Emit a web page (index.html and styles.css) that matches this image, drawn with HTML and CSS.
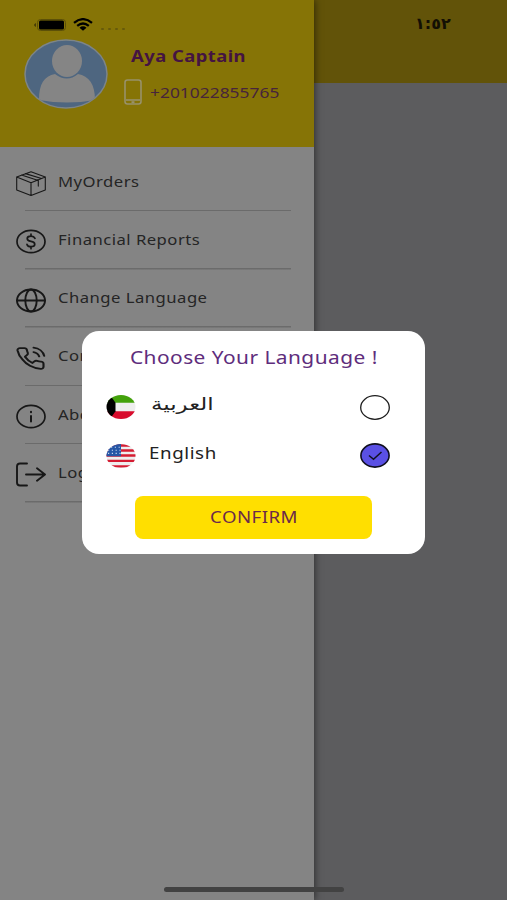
FILE: index.html
```html
<!DOCTYPE html>
<html lang="en">
<head>
  <meta charset="UTF-8" />
  <meta name="viewport" content="width=device-width, initial-scale=1.0" />
  <title>Choose Your Language</title>
  <link rel="stylesheet" href="styles.css">
</head>
<body>
  <div class="screen">
    <aside class="drawer">
      <header class="profile">
        <div class="status">
          <svg class="battery" viewBox="0 0 32 12"><path d="M2 4v4Q0 7 0 6t2-2z" fill="#463d08"/><rect x="3.5" y=".5" width="28" height="11" rx="3" fill="none" stroke="#5c5008"/><rect x="5" y="1.500" width="25" height="9" rx="1.500"/></svg>
          <svg class="wifi" viewBox="0 0 20 13" fill="none" stroke="#000" stroke-width="2.300"><path d="M1 4.800Q10-2.500 19 4.800M4.200 7.800Q10 3.200 15.800 7.800"/><path d="M6.500 9.700Q10 7 13.500 9.700L10 12.800z" fill="#000" stroke="none"/></svg>
          <span class="dots"><i></i><i></i><i></i><i></i></span>
        </div>
        <div class="user">
          <svg class="avatar" viewBox="0 0 84 70"><defs><clipPath id="face"><ellipse cx="42" cy="35" rx="40.500" ry="33.500"/></clipPath></defs><ellipse cx="42" cy="35" rx="41" ry="34" fill="#4e6680" stroke="#7d8589" stroke-width="1.500"/><g clip-path="url(#face)"><path d="M15 61C15 45 20 37 31 35q12 9 23 0c11 2 17 10 17 26q-28 5-56 0z" fill="#858585"/><ellipse cx="43" cy="22" rx="15" ry="16" fill="#858585"/></g></svg>
          <div class="contact">
            <div class="name"><span>Aya Captain</span></div>
            <div class="phone">
              <svg viewBox="0 0 18 26" fill="none" stroke="#98916a" stroke-width="1.600"><rect x="1" y="1" width="16" height="24" rx="2.500"/><path d="M2 21h14"/><path d="M7.500 23.200h3" stroke-width="2"/></svg>
              <span>+201022855765</span>
            </div>
          </div>
        </div>
      </header>
      <nav class="menu">
        <a class="item">
          <svg viewBox="0 0 30 24" preserveAspectRatio="none" stroke-width="1.100"><path d="M15 .7L29.300 5.700v12.500L15 23.500.7 18.200V5.700zM.7 5.700L15 11.200l14.300-5.500M15 11.200v12.300M5.500 3.900l16.800 5.200v5.400M9.500 2.500l16 4.700"/></svg>
          <span>MyOrders</span>
        </a>
        <a class="item">
          <svg viewBox="0 0 30 24" stroke-width="1.700"><ellipse cx="15" cy="12" rx="14" ry="11.200"/><path d="M19 8.800Q18 6.700 15 6.700c-5 0-5 4.700 0 5.200s5 5.300 0 5.300q-3.300 0-4-2.300M15 4.700v2M15 17.200v2"/></svg>
          <span>Financial Reports</span>
        </a>
        <a class="item">
          <svg viewBox="0 0 30 24" stroke-width="1.900"><ellipse cx="15" cy="12" rx="14" ry="11"/><ellipse cx="15" cy="12" rx="5.700" ry="11"/><path d="M1 12h28"/></svg>
          <span>Change Language</span>
        </a>
        <a class="item">
          <svg viewBox="0 0 24 24" preserveAspectRatio="none" stroke-width="1.700"><path d="M14.050 1.500a10 10 0 0 1 8.500 8M14.050 5.800a6 6 0 0 1 4.500 4.200M22 17v3a2 2 0 0 1-2.200 2A19.800 19.800 0 0 1 11.200 19a19.500 19.500 0 0 1-6-6A19.800 19.800 0 0 1 1.200 4.200 2 2 0 0 1 3.200 2h3.500a2 2 0 0 1 2 1.700c.1 1 .4 1.900.7 2.800a2 2 0 0 1-.5 2.100L7.200 10.300a16 16 0 0 0 6 6l1.500-1.500a2 2 0 0 1 2.100-.5c.9.300 1.900.6 2.900.7A2 2 0 0 1 22 17z"/></svg>
          <span>Contact</span>
        </a>
        <a class="item">
          <svg viewBox="0 0 30 24" stroke-width="1.700"><ellipse cx="15" cy="12" rx="14" ry="11.200"/><path d="M15 11.500v5.500M15 7.200v.6" stroke-width="2"/></svg>
          <span>About</span>
        </a>
        <a class="item">
          <svg viewBox="0 0 30 24" stroke-width="1.900"><path d="M11 1H4Q1 1 1 4v16q0 3 3 3h7M10 12h18.500M21 5.800l8 6.200-8 6.200"/></svg>
          <span>Logout</span>
        </a>
      </nav>
    </aside>
    <main class="page">
      <div class="topbar"><time lang="ar">١:٥٢</time></div>
    </main>

    <div class="modal">
      <h2><span>Choose Your Language !</span></h2>
      <div class="option">
        <svg class="flag" viewBox="0 0 30 24"><defs><clipPath id="oval"><ellipse cx="15" cy="12" rx="14.500" ry="12"/></clipPath></defs><g clip-path="url(#oval)"><path fill="#eee" d="M0 0h30v24H0z"/><path fill="#43a20b" d="M0 0h30v7.800H0z"/><path fill="#d80c2d" d="M0 16.200h30V24H0z"/><path d="M0 0h4l5.500 7.800v8.400L4 24H0z"/></g></svg>
        <span class="label arabic" lang="ar">العربية</span>
        <svg class="radio" viewBox="0 0 30 25"><ellipse cx="15" cy="12.500" rx="14.300" ry="11.800" fill="#fff" stroke="#1d1d1d" stroke-width="1.300"/></svg>
      </div>
      <div class="option">
        <svg class="flag" viewBox="0 0 30 24"><g clip-path="url(#oval)"><path fill="#eee" d="M0 0h30v24H0z"/><path stroke="#d51c32" stroke-width="2.300" d="M0 1.500h30M0 6.500h30M0 11.500h30M0 16.800h30M0 22.300h30"/><path fill="#2556a6" d="M0 0h15v12.200H0z"/><path stroke="#c8d8ef" stroke-width="1.100" stroke-dasharray="1.200 2.600" d="M5 3.200h10M2 6.300h13M2 9.400h13"/></g></svg>
        <span class="label">English</span>
        <svg class="radio" viewBox="0 0 30 25"><ellipse cx="15" cy="12.500" rx="14.100" ry="11.600" fill="#5a50e4" stroke="#10101f" stroke-width="1.600"/><path d="M9 12.500l4.500 3.800 8-7.300" fill="none" stroke="#10101f" stroke-width="1.500"/></svg>
      </div>
      <button type="button"><span>CONFIRM</span></button>
    </div>
    <div class="home-bar"></div>
  </div>
</body>
</html>
```
FILE: styles.css
```css
body {
  margin: 0;
  font-family: 'Noto Sans', 'DejaVu Sans', sans-serif;
}

svg {
  display: block;
  flex: none;
}

/* wide letterforms */
span,
time {
  display: inline-block;
  white-space: nowrap;
  transform: scaleX(1.2);
  transform-origin: left center;
}

.screen {
  position: relative;
  display: flex;
  width: 507px;
  height: 900px;
  overflow: hidden;
  background-color: #5c5c5e;
}

.drawer {
  z-index: 1;
  width: 314px;
  background-color: #848484;
  box-shadow: 1px 0 7px rgba(0, 0, 0, 0.5);
}

.profile {
  box-sizing: border-box;
  height: 147px;
  padding-top: 18px;
  background-color: #867406;
}

.status {
  display: flex;
  align-items: center;
  height: 13px;
  padding-left: 34px;
}

.battery {
  width: 32px;
  height: 12px;
}

.wifi {
  width: 20px;
  height: 13px;
  margin-left: 7px;
}

.dots {
  display: flex;
  gap: 4px;
  margin: 9px 0 0 8px;
  transform: none;
}

.dots i {
  width: 3px;
  height: 2px;
  border-radius: 1px;
  background-color: #665a0b;
}

.user {
  display: flex;
  padding: 8px 0 0 24px;
}

.avatar {
  width: 84px;
  height: 70px;
}

.contact {
  padding-left: 16px;
}

.name {
  height: 34px;
  padding-left: 7px;
  color: #441342;
  font-size: 16px;
  font-weight: 700;
  line-height: 35px;
  letter-spacing: 0.4px;
}

.name span {
  transform: scaleX(1.15);
}

.phone {
  display: flex;
  align-items: center;
  gap: 8px;
  height: 38px;
  color: #47243b;
  font-size: 15px;
}

.phone span {
  transform: scaleX(1.16);
}

.phone svg {
  width: 18px;
  height: 26px;
}

.menu {
  padding-top: 6px;
}

.item {
  display: flex;
  align-items: center;
  box-sizing: border-box;
  height: 58.25px;
  padding: 3px 0 0 16px;
  background: linear-gradient(#6b6b6b, #6b6b6b) 25px 100% / 266px 1.500px no-repeat;
  color: #252525;
  font-size: 14px;
  letter-spacing: 0.4px;
}

.item svg {
  width: 30px;
  height: 25px;
  margin-right: 12px;
  fill: none;
  stroke: #171717;
  stroke-linecap: round;
  stroke-linejoin: round;
}

.item span {
  margin-top: -5px;
  transform: scaleX(1.19);
}

.page {
  flex: 1;
}

.topbar {
  height: 83px;
  background-color: #625309;
}

.topbar time {
  margin: 14px 0 0 101px;
  color: #130f04;
  font-family: 'DejaVu Sans', sans-serif;
  font-size: 16px;
  font-weight: 700;
  line-height: 20px;
  transform: none;
}

.modal {
  position: absolute;
  z-index: 2;
  top: 331px;
  left: 82px;
  box-sizing: border-box;
  width: 343px;
  height: 223px;
  padding-top: 6px;
  border-radius: 17px;
  background-color: #fff;
}

.modal h2 {
  margin: 0;
  height: 46px;
  color: #5e2d7c;
  font-size: 18px;
  font-weight: 400;
  line-height: 40px;
  letter-spacing: 0.4px;
  text-align: center;
}

.modal h2 span {
  transform: scaleX(1.16);
  transform-origin: center;
}

.modal button span {
  transform: scaleX(1.1);
  transform-origin: center;
}

.option {
  display: flex;
  align-items: center;
  height: 48.500px;
  padding: 0 35px 0 24px;
}

.flag {
  width: 30px;
  height: 24px;
}

.label {
  margin: -6px auto 0 13px;
  color: #222;
  font-size: 16px;
  letter-spacing: 0.5px;
  transform: scaleX(1.17);
}

.arabic {
  margin-left: 15px;
  font-family: 'DejaVu Sans', sans-serif;
  font-size: 17px;
  letter-spacing: 0;
  transform: scaleX(1.35);
}

.radio {
  width: 30px;
  height: 25px;
}

.modal button {
  display: block;
  width: 237px;
  height: 43px;
  margin: 16px 0 0 53px;
  padding: 0 0 2px;
  border: none;
  border-radius: 8px;
  background-color: #ffdf00;
  color: #6b2a4a;
  font-family: inherit;
  font-size: 17px;
  letter-spacing: 0.4px;
}

.home-bar {
  position: absolute;
  z-index: 1;
  bottom: 8px;
  left: 164px;
  width: 180px;
  height: 5px;
  border-radius: 3px;
  background-color: #424242;
}
```
